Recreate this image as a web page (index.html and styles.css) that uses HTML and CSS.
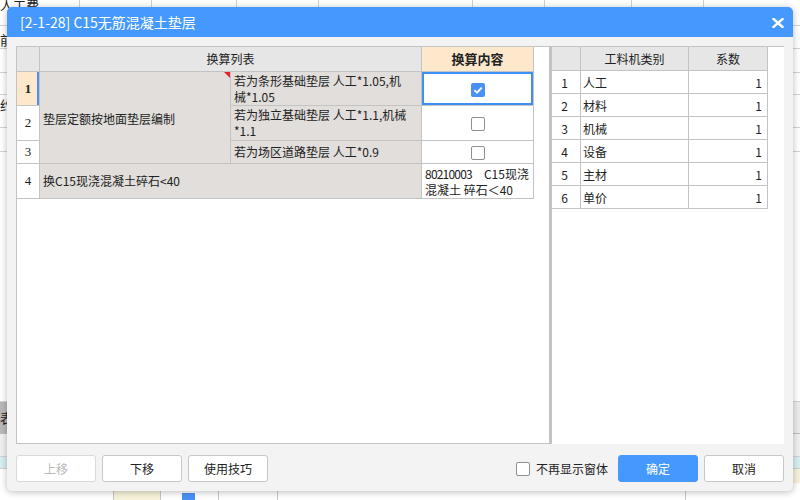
FILE: index.html
```html
<!DOCTYPE html>
<html lang="zh-CN">
<head>
<meta charset="utf-8">
<title>C15无筋混凝土垫层</title>
<link rel="stylesheet" href="styles.css">
</head>
<body>
<div class="desk">
  <div class="drow d1"><span class="dtext">人工费</span></div>
  <div class="drow d2"><span class="dtext">前</span></div>
  <div class="drow d3"></div>
  <div class="drow d4"></div>
  <div class="drow d5"><span class="dtext">约</span></div>
  <div class="drow d6"></div>
  <div class="drow d6b"></div>
  <div class="drow d7"><span class="dtext">表</span></div>
  <div class="drow d8"></div>
  <div class="drow d9"></div>
</div>

<div class="dialog">
  <div class="titlebar">
    <span class="title">[2-1-28] C15无筋混凝土垫层</span>
    <svg class="close" width="12" height="10" viewBox="0 0 12 10"><path d="M1.5 1 L10.5 9 M10.5 1 L1.5 9" stroke="#fff" stroke-width="2.4" stroke-linecap="square"/></svg>
  </div>
  <div class="body">
    <div class="panels">
      <div class="left-panel">
        <table class="lt">
          <colgroup><col class="c0"><col class="c1"><col class="c2"><col class="c3"></colgroup>
          <tr class="h0">
            <th class="rn"></th>
            <th colspan="2" class="center">换算列表</th>
            <th class="hl">换算内容</th>
          </tr>
          <tr class="h1">
            <td class="rn sel">1</td>
            <td rowspan="3" class="g merged">垫层定额按地面垫层编制<span class="flag"></span></td>
            <td class="g">若为条形基础垫层 人工*1.05,机<br>械*1.05</td>
            <td class="cb selcell"><svg class="chk" width="14" height="14" viewBox="0 0 14 14"><rect width="14" height="14" rx="2" fill="#4a91f6"/><path d="M3.4 7.3 L6 9.7 L10.7 4.6" stroke="#fff" stroke-width="1.9" fill="none"/></svg></td>
          </tr>
          <tr class="h2">
            <td class="rn">2</td>
            <td class="g">若为独立基础垫层 人工*1.1,机械<br>*1.1</td>
            <td class="cb"><span class="box"></span></td>
          </tr>
          <tr class="h3">
            <td class="rn">3</td>
            <td class="g">若为场区道路垫层 人工*0.9</td>
            <td class="cb"><span class="box"></span></td>
          </tr>
          <tr class="h4">
            <td class="rn">4</td>
            <td colspan="2" class="g">换C15现浇混凝土碎石&lt;40</td>
            <td class="txt"><span class="num">80210003</span>　C15现浇<br>混凝土 碎石＜40</td>
          </tr>
        </table>
      </div>
      <div class="splitter"></div>
      <div class="right-panel">
        <table class="rt">
          <colgroup><col class="k0"><col class="k1"><col class="k2"></colgroup>
          <tr class="rh"><th></th><th>工料机类别</th><th>系数</th></tr>
          <tr><td class="n">1</td><td>人工</td><td class="v">1</td></tr>
          <tr><td class="n">2</td><td>材料</td><td class="v">1</td></tr>
          <tr><td class="n">3</td><td>机械</td><td class="v">1</td></tr>
          <tr><td class="n">4</td><td>设备</td><td class="v">1</td></tr>
          <tr><td class="n">5</td><td>主材</td><td class="v">1</td></tr>
          <tr><td class="n">6</td><td>单价</td><td class="v">1</td></tr>
        </table>
      </div>
    </div>
    <div class="footer">
      <div class="btn disabled">上移</div>
      <div class="btn">下移</div>
      <div class="btn">使用技巧</div>
      <div class="spacer"></div>
      <label class="nomore"><span class="box"></span><span>不再显示窗体</span></label>
      <div class="btn primary">确定</div>
      <div class="btn">取消</div>
    </div>
  </div>
</div>
</body>
</html>
```

FILE: styles.css
```css
* { box-sizing: border-box; margin: 0; padding: 0; }
html, body { width: 800px; height: 500px; overflow: hidden; }
body {
  position: relative;
  font-family: "Noto Sans CJK SC", "Noto Sans", sans-serif;
  font-size: 12px;
  color: #222;
  background: #fff;
}

/* backdrop application */
.desk {
  position: absolute;
  inset: 0;
  display: flex;
  flex-direction: column;
  background-color: #fff;
  background-image:
    linear-gradient(#d2d2d2, #d2d2d2), linear-gradient(#d2d2d2, #d2d2d2),
    linear-gradient(#d2d2d2, #d2d2d2), linear-gradient(#d2d2d2, #d2d2d2),
    linear-gradient(#d2d2d2, #d2d2d2), linear-gradient(#d2d2d2, #d2d2d2),
    linear-gradient(#d2d2d2, #d2d2d2), linear-gradient(#d2d2d2, #d2d2d2),
    linear-gradient(#d2d2d2, #d2d2d2),
    linear-gradient(#c8c8c8, #c8c8c8), linear-gradient(#c8c8c8, #c8c8c8),
    linear-gradient(#c8c8c8, #c8c8c8), linear-gradient(#c8c8c8, #c8c8c8),
    linear-gradient(#c8c8c8, #c8c8c8),
    linear-gradient(#f7f3da, #f7f3da), linear-gradient(#4a91f6, #4a91f6),
    linear-gradient(#f5f1dc, #f5f1dc);
  background-size:
    1px 10px, 1px 10px, 1px 10px, 1px 10px, 1px 10px, 1px 10px, 1px 10px, 1px 10px, 1px 10px,
    1px 12px, 1px 12px, 1px 12px, 1px 12px, 1px 12px,
    46px 12px, 13px 10px, 10px 24px;
  background-position:
    33px 0, 79px 0, 151px 0, 236px 0, 318px 0, 472px 0, 544px 0, 631px 0, 703px 0,
    113px 490px, 160px 490px, 218px 490px, 277px 490px, 685px 490px,
    114px 490px, 182px 493px, 790px 459px;
  background-repeat: no-repeat;
}
.drow { flex: none; border-bottom: 1px solid #d2d2d2; font-size: 13px; line-height: 16px; overflow: hidden; }
.dtext { display: block; }
.d1 { height: 29px; margin-top: -3px; }
.d2 { height: 23px; padding-top: 6px; }
.d3 { height: 24px; }
.d4 { height: 22px; }
.d5 { height: 33px; padding-top: 2px; }
.d6 { height: 24px; }
.d6b { height: 250px; }
.d7 {
  height: 32px;
  padding-top: 8px;
  background: #ececec linear-gradient(#b9b9b9, #b9b9b9) 0 0 / 20px 100% no-repeat;
  border-bottom-color: #bdbdbd;
}
.d8 { height: 23px; background: #f0f0f0; }
.d9 { height: 12px; background: #d8eef0; }

/* dialog window */
.dialog {
  position: absolute;
  left: 7px;
  top: 7px;
  width: 786px;
  height: 484px;
  background: #f3f3f3;
  border-radius: 5px;
  box-shadow: 0 1px 7px rgba(0, 0, 0, 0.28);
  display: flex;
  flex-direction: column;
  overflow: hidden;
}
.titlebar {
  height: 30px;
  flex: none;
  background: #4599fe;
  display: flex;
  align-items: center;
  justify-content: space-between;
  padding: 0 9px 0 13px;
  color: #fff;
  font-size: 14px;
}
.title { line-height: 20px; padding-bottom: 1px; }
.close { display: block; margin-top: 1px; }

.body {
  flex: 1;
  padding: 9px;
  display: flex;
  flex-direction: column;
}
.panels { display: flex; height: 398px; flex: none; }
.left-panel {
  width: 533px;
  background: #fff;
  border: 1px solid #c3c3c3;
  border-right: 0;
}
.splitter { width: 3px; background: #c3c3c3; }
.right-panel {
  flex: 1;
  background: #fff;
  border-top: 1px solid #c3c3c3;
}

/* left table */
.lt {
  border-collapse: separate;
  border-spacing: 0;
  table-layout: fixed;
  width: 517px;
}
.lt .c0 { width: 23px; }
.lt .c1 { width: 191px; }
.lt .c2 { width: 191px; }
.lt .c3 { width: 112px; }
.lt th, .lt td {
  border-right: 1px solid #c3c3c3;
  border-bottom: 1px solid #c3c3c3;
  padding: 0 3px;
  font-weight: normal;
  line-height: 16px;
  text-align: left;
  vertical-align: middle;
  white-space: nowrap;
}
.lt th { background: #e6e6e6; }
.lt th.center { text-align: center; }
.lt th.hl { background: #fde8cc; font-weight: bold; text-align: center; font-size: 13px; }
.lt .h0 { height: 25px; }
.lt .h1 { height: 34px; }
.lt .h2 { height: 35px; }
.lt .h3 { height: 23px; }
.lt .h4 { height: 35px; }
.lt td.rn {
  background: #fff;
  text-align: center;
  padding: 0;
  font-family: "Liberation Serif", serif;
  font-size: 13px;
}
.lt th.rn { padding: 0; }
.lt td.rn.sel {
  background: #fde8cc;
  font-weight: bold;
  box-shadow: inset -2px 0 0 #4a91f6;
}
.lt td.g { background: #e1dedb; }
.lt td.merged { position: relative; padding-top: 3px; }
.flag {
  position: absolute;
  top: 0;
  right: 0;
  width: 0;
  height: 0;
  border-top: 6px solid #e8202a;
  border-left: 6px solid transparent;
}
.lt td.cb { background: #fff; text-align: center; padding: 0; }
.lt td.cb .chk, .lt td.cb .box { display: inline-block; vertical-align: middle; }
.lt td.selcell { box-shadow: inset 0 0 0 2px #3d8ef6; }
.lt td.txt { background: #fff; line-height: 16px; padding: 1px 2px 0 3px; overflow: hidden; }
.num { letter-spacing: -0.8px; }
.box {
  width: 14px;
  height: 14px;
  border: 1px solid #8f8f8f;
  border-radius: 2px;
  background: #fff;
}

/* right table */
.rt {
  border-collapse: separate;
  border-spacing: 0;
  table-layout: fixed;
  width: 216px;
}
.rt .k0 { width: 29px; }
.rt .k1 { width: 108px; }
.rt .k2 { width: 79px; }
.rt th, .rt td {
  border-right: 1px solid #c3c3c3;
  border-bottom: 1px solid #c3c3c3;
  height: 23px;
  padding: 0 2px;
  font-weight: normal;
  white-space: nowrap;
  text-align: left;
}
.rt tr.rh th { background: #e6e6e6; text-align: center; height: 24px; }
.rt td.n { text-align: center; padding-right: 5px; }
.rt td.v { text-align: right; padding-right: 5px; }

/* footer */
.footer {
  margin-top: 11px;
  height: 27px;
  display: flex;
  align-items: center;
  gap: 6px;
}
.btn {
  width: 80px;
  height: 27px;
  flex: none;
  border: 1px solid #c7c7c7;
  border-radius: 3px;
  background: #fff;
  display: flex;
  align-items: center;
  justify-content: center;
  color: #222;
}
.btn.disabled { color: #b8b8b8; border-color: #dadada; }
.btn.primary { background: #4599fe; border-color: #4599fe; color: #fff; }
.spacer { flex: 1; }
.nomore {
  display: flex;
  align-items: center;
  gap: 6px;
  margin-right: 4px;
  color: #222;
}
.nomore .box { display: block; }
```
